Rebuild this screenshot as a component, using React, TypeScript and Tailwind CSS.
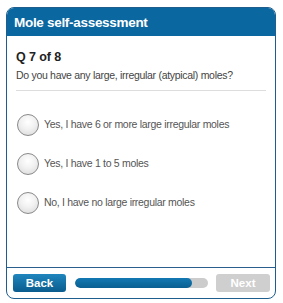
import React from "react";

const options = [
  "Yes, I have 6 or more large irregular moles",
  "Yes, I have 1 to 5 moles",
  "No, I have no large irregular moles",
];

function Radio() {
  return (
    <span className="block w-[22px] h-[22px] rounded-full border-[1.5px] border-[#8a8a8a] bg-[radial-gradient(circle_at_50%_35%,#ffffff_0%,#f1f1f1_45%,#d6d6d6_100%)] shrink-0" />
  );
}

export default function App() {
  return (
    <div className="w-[283px] h-[303px] bg-white pt-[7px] pl-[6px]" style={{ fontFamily: '"Liberation Sans", Arial, sans-serif' }}>
      <div className="w-[270px] h-[292px] border border-[#1d5e8f] rounded-[8px] overflow-hidden flex flex-col bg-white">
        <div className="h-[28px] bg-[#0a67a0] flex items-center pl-[7px] shrink-0">
          <span className="text-white font-bold text-[13.5px] leading-[15px] tracking-[-0.3px]">Mole self-assessment</span>
        </div>
        <div className="flex-1 flex flex-col">
          <div className="mx-[9px] pt-[14px] pb-[8px] border-b border-[#dddddd]">
            <div className="text-[#222222] font-bold text-[12.5px] leading-[15px] tracking-[-0.1px]">Q 7 of 8</div>
            <div className="mt-[4px] text-[#444444] text-[10.5px] leading-[13px] tracking-[-0.3px]">Do you have any large, irregular (atypical) moles?</div>
          </div>
          <div className="mx-[9px] mt-[14px] flex flex-col">
            {options.map((o) => (
              <div key={o} className="h-[39px] flex items-center pl-[1px] gap-[5px]">
                <Radio />
                <span className="text-[#555555] text-[10.5px] leading-[13px] tracking-[-0.3px]">{o}</span>
              </div>
            ))}
          </div>
        </div>
        <div className="h-[31px] border-t border-[#2a5f8d] flex items-start pt-[6px] pl-[6px] pr-[5px] shrink-0">
          <button className="w-[53px] h-[18px] rounded-[3px] bg-[linear-gradient(#1f86bd,#0a5c8e)] text-white font-bold text-[11.5px] leading-[18px] flex items-center justify-center">Back</button>
          <div className="ml-[9px] mt-[4px] w-[133px] h-[10px] rounded-full bg-[#cccccc] overflow-hidden">
            <div className="h-full rounded-full bg-[linear-gradient(#1379b2,#0a5f92)]" style={{ width: "88%" }} />
          </div>
          <button className="ml-[8px] w-[54px] h-[18px] rounded-[3px] bg-[#cfcfcf] text-white font-bold text-[11.5px] leading-[18px] flex items-center justify-center">Next</button>
        </div>
      </div>
    </div>
  );
}
